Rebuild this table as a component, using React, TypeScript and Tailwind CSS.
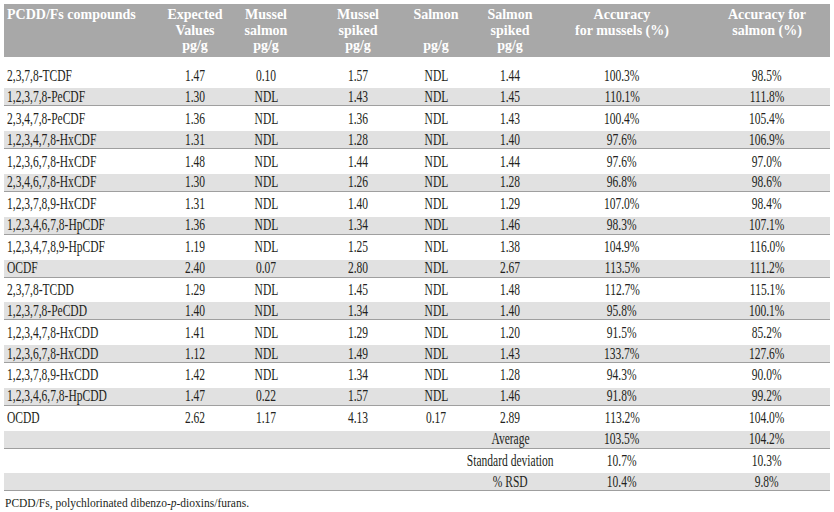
const cols = 'grid-cols-[156px_70px_72px_112px_44px_104px_120px_1fr]';

const rows = [
  ['2,3,7,8-TCDF', '1.47', '0.10', '1.57', 'NDL', '1.44', '100.3%', '98.5%'],
  ['1,2,3,7,8-PeCDF', '1.30', 'NDL', '1.43', 'NDL', '1.45', '110.1%', '111.8%'],
  ['2,3,4,7,8-PeCDF', '1.36', 'NDL', '1.36', 'NDL', '1.43', '100.4%', '105.4%'],
  ['1,2,3,4,7,8-HxCDF', '1.31', 'NDL', '1.28', 'NDL', '1.40', '97.6%', '106.9%'],
  ['1,2,3,6,7,8-HxCDF', '1.48', 'NDL', '1.44', 'NDL', '1.44', '97.6%', '97.0%'],
  ['2,3,4,6,7,8-HxCDF', '1.30', 'NDL', '1.26', 'NDL', '1.28', '96.8%', '98.6%'],
  ['1,2,3,7,8,9-HxCDF', '1.31', 'NDL', '1.40', 'NDL', '1.29', '107.0%', '98.4%'],
  ['1,2,3,4,6,7,8-HpCDF', '1.36', 'NDL', '1.34', 'NDL', '1.46', '98.3%', '107.1%'],
  ['1,2,3,4,7,8,9-HpCDF', '1.19', 'NDL', '1.25', 'NDL', '1.38', '104.9%', '116.0%'],
  ['OCDF', '2.40', '0.07', '2.80', 'NDL', '2.67', '113.5%', '111.2%'],
  ['2,3,7,8-TCDD', '1.29', 'NDL', '1.45', 'NDL', '1.48', '112.7%', '115.1%'],
  ['1,2,3,7,8-PeCDD', '1.40', 'NDL', '1.34', 'NDL', '1.40', '95.8%', '100.1%'],
  ['1,2,3,4,7,8-HxCDD', '1.41', 'NDL', '1.29', 'NDL', '1.20', '91.5%', '85.2%'],
  ['1,2,3,6,7,8-HxCDD', '1.12', 'NDL', '1.49', 'NDL', '1.43', '133.7%', '127.6%'],
  ['1,2,3,7,8,9-HxCDD', '1.42', 'NDL', '1.34', 'NDL', '1.28', '94.3%', '90.0%'],
  ['1,2,3,4,6,7,8-HpCDD', '1.47', '0.22', '1.57', 'NDL', '1.46', '91.8%', '99.2%'],
  ['OCDD', '2.62', '1.17', '4.13', '0.17', '2.89', '113.2%', '104.0%'],
  ['', '', '', '', '', 'Average', '103.5%', '104.2%'],
  ['', '', '', '', '', 'Standard deviation', '10.7%', '10.3%'],
  ['', '', '', '', '', '% RSD', '10.4%', '9.8%'],
];

// narrow the serif so it reads like the condensed face of the source
function Cond({ children, left }: { children: string; left?: boolean }) {
  return (
    <span className={`inline-block whitespace-nowrap scale-x-[0.72] ${left ? 'origin-left' : 'origin-center'}`}>
      {children}
    </span>
  );
}

function HeadCell({ lines, className = '' }: { lines: string[]; className?: string }) {
  return (
    <div className={`flex flex-col items-center whitespace-nowrap ${className}`}>
      {lines.map((l, i) => (
        <span key={i} className="h-[15.5px]">
          {l}
        </span>
      ))}
    </div>
  );
}

export default function App() {
  return (
    <div className="w-[834px] h-[512px] overflow-hidden bg-white px-1 pt-1 font-['Liberation_Serif',serif] text-[#231f20]">
      <div className={`grid ${cols} h-[53px] pt-[3px] bg-[#a8a8a8] text-white font-bold text-[14px] leading-[15.5px]`}>
        <div className="pl-[3px] whitespace-nowrap">PCDD/Fs compounds</div>
        <HeadCell lines={['Expected', 'Values', 'pg/g']} />
        <HeadCell lines={['Mussel', 'salmon', 'pg/g']} />
        <HeadCell lines={['Mussel', 'spiked', 'pg/g']} />
        <HeadCell lines={['Salmon', '', 'pg/g']} />
        <HeadCell lines={['Salmon', 'spiked', 'pg/g']} />
        <HeadCell lines={['Accuracy', 'for mussels (%)']} />
        <HeadCell lines={['Accuracy for', 'salmon (%)']} className="pl-[22px]" />
      </div>

      <div className="mt-[10px] flex flex-col gap-[3.4px] text-[16px] leading-none">
        {rows.map((r, i) => (
          <div
            key={i}
            className={`grid ${cols} h-[18px] items-center ${
              i % 2 === 1 ? 'bg-[#e1e1e1] border-b border-[#9f9f9f]' : ''
            }`}
          >
            {r.map((c, j) =>
              j === 0 ? (
                <div key={j} className="pl-[3px]">
                  <Cond left>{c}</Cond>
                </div>
              ) : (
                <div key={j} className={`flex justify-center ${j === 7 ? 'pl-[22px]' : ''}`}>
                  <Cond>{c}</Cond>
                </div>
              )
            )}
          </div>
        ))}
      </div>

      <p className="mt-[5px] pl-[1px] text-[11.5px] leading-[14px] whitespace-nowrap">
        PCDD/Fs, polychlorinated dibenzo-<i>p</i>-dioxins/furans.
      </p>
    </div>
  );
}
